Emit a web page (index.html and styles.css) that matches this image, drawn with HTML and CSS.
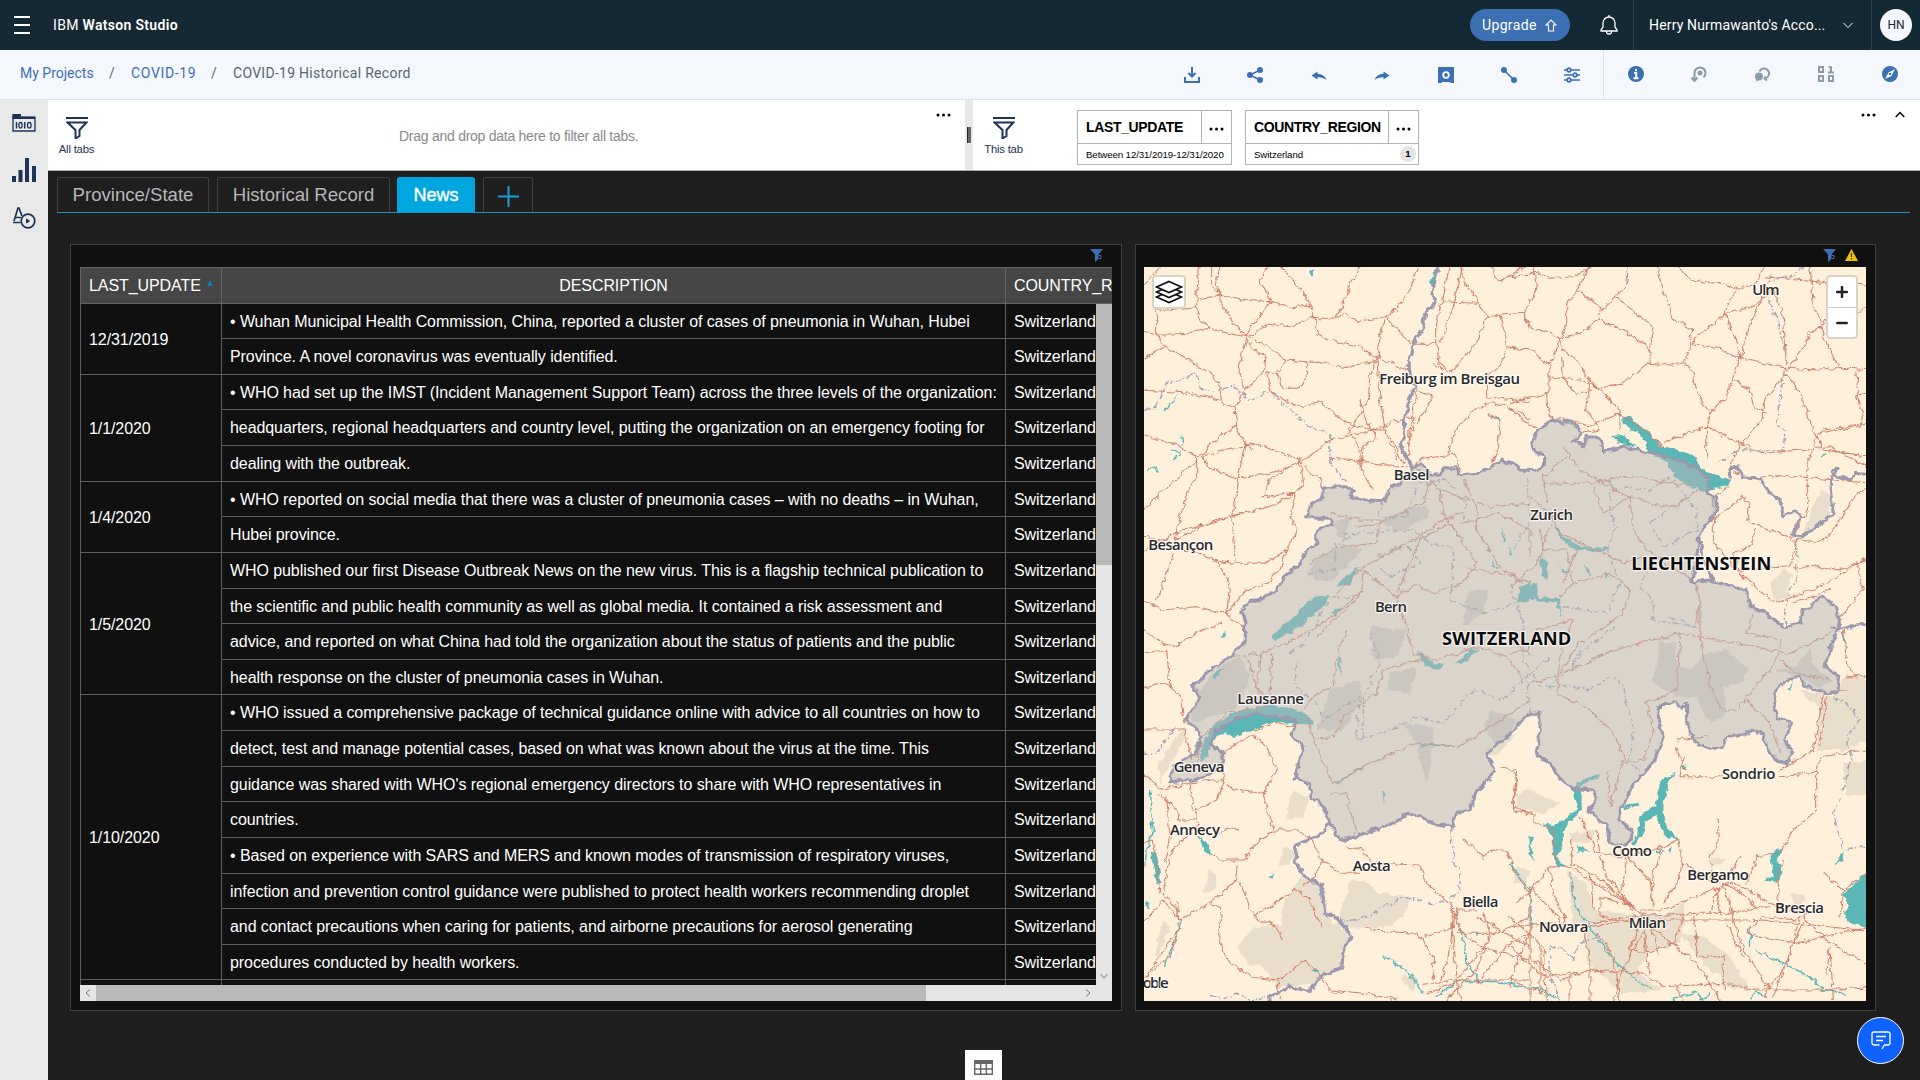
FILE: index.html
```html
<!DOCTYPE html>
<html lang="en">
<head>
<meta charset="utf-8">
<title>IBM Watson Studio</title>
<link rel="stylesheet" href="styles.css">
</head>
<body>
<header class="topbar">
  <svg class="menu" width="16" height="18" viewBox="0 0 16 18"><path d="M0 1h16M0 9h16M0 17h16" stroke="#fff" stroke-width="2"/></svg>
  <div class="brand">IBM <b>Watson Studio</b></div>
  <button class="upgrade"><span>Upgrade</span><svg width="12" height="13" viewBox="0 0 12 13"><path d="M6 1 1 6h2.500v6h5V6H11z" fill="none" stroke="#fff" stroke-width="1.100"/></svg></button>
  <svg class="bell" width="18" height="20" viewBox="0 0 18 20" fill="none" stroke="#fff" stroke-width="1.300"><path d="M9 0v2M1 16v-1l2-3V8a6 6 0 0 1 12 0v4l2 3v1zM6.500 16.500a2.500 2.500 0 0 0 5 0"/></svg>
  <div class="account"><span>Herry Nurmawanto's Acco...</span><svg width="10" height="7" viewBox="0 0 10 7"><path d="m.5 1 4.500 4.500L9.500 1" fill="none" stroke="#fff"/></svg></div>
  <div class="avatar"><span>HN</span></div>
</header>

<nav class="subbar">
  <div class="crumbs"><a>My Projects</a><i>/</i><a class="proj">COVID-19</a><i>/</i><span>COVID-19 Historical Record</span></div>
  <div class="tools">
    <svg viewBox="0 0 16 16"><path d="M8 0v9M4.500 6 8 9.500 11.500 6M1 10v5h14v-5" fill="none" stroke="#3d70b2" stroke-width="2"/></svg>
    <svg viewBox="0 0 16 16"><path d="M13 3 3 8l10 5" fill="none" stroke="#3d70b2" stroke-width="1.500"/><g fill="#3d70b2"><circle cx="3" cy="8" r="3"/><circle cx="13" cy="3" r="3"/><circle cx="13" cy="13" r="3"/></g></svg>
    <svg viewBox="0 0 16 16"><path d="m.5 8.500 6-4v2.300c4.500.2 7.500 2.300 9 6.200-3-2.200-5.500-3-9-2.800v2.300z" fill="#3d70b2"/></svg>
    <svg viewBox="0 0 16 16"><path d="m15.500 8.500-6-4v2.300C5 7 2 9.100.5 13c3-2.200 5.500-3 9-2.800v2.300z" fill="#3d70b2"/></svg>
    <svg viewBox="0 0 16 16"><path d="M0 0h16v16h-3l-1-1H4l-1 1H0z" fill="#3d70b2"/><circle cx="8" cy="8" r="2.800" fill="none" stroke="#fff" stroke-width="1.700"/></svg>
    <svg viewBox="0 0 16 16"><path d="m3 3 10 10" stroke="#3d70b2" stroke-width="1.600"/><circle cx="3" cy="3" r="3" fill="#3d70b2"/><circle cx="13" cy="13" r="3" fill="#3d70b2"/></svg>
    <svg viewBox="0 0 16 16"><g fill="none" stroke="#3d70b2" stroke-width="1.700"><path d="M0 3h16M0 8h16M0 13h16"/><g fill="#f4f7fb"><circle cx="5" cy="3" r="1.800"/><circle cx="11" cy="8" r="1.800"/><circle cx="5" cy="13" r="1.800"/></g></g></svg>
  </div>
  <div class="tools side">
    <svg viewBox="0 0 16 16"><circle cx="8" cy="8" r="8" fill="#3d70b2"/><path d="M8 3v2.200M6 7h2.200v5M5.500 12.200h5" stroke="#fff" stroke-width="2" fill="none"/></svg>
    <svg viewBox="0 0 16 16" fill="none" stroke="#8c9ba5" stroke-width="2"><path d="M3.500 14.500V7a5.500 5.500 0 1 1 9 4.200M.5 11.500l3 3.500 3-3.500"/><circle cx="9" cy="7" r="2.500" fill="#8c9ba5" stroke="none"/></svg>
    <svg viewBox="0 0 16 16"><path d="M4.500 5.500a5 5 0 1 1 5.500 6.900M10.500 10.500l-1 2 2.500 2" fill="none" stroke="#8c9ba5" stroke-width="2"/><circle cx="4" cy="10.500" r="4" fill="#8c9ba5"/><path d="m1 16 1-4h4z" fill="#8c9ba5"/></svg>
    <svg viewBox="0 0 16 16" fill="none" stroke="#8c9ba5" stroke-width="2"><path d="M1 1h4v5H1zM1 10h4v5H1zM11 10h4v5h-4zM10.500 1.300H13V6M10 6.500h6"/></svg>
    <svg viewBox="0 0 16 16"><circle cx="8" cy="8" r="8" fill="#3d70b2"/><path d="m13 3-3.500 7L3 13l3.500-6.500z" fill="#fff"/><circle cx="8" cy="8" r="1.300" fill="#3d70b2"/></svg>
  </div>
</nav>

<div class="body">
  <aside class="rail">
    <svg width="24" height="18" viewBox="0 0 24 18"><path d="M1 1v16h22V3.500H1" fill="none" stroke="#1d3458" stroke-width="1.300"/><path d="M.5 0H9v2.500h14V5H.5z" fill="#1d3458"/><path d="M4.500 8v6.500M12.700 8v6.500" stroke="#1d3458" stroke-width="1.500"/><rect x="7" y="8.500" width="3" height="5.500" rx="1.500" fill="none" stroke="#1d3458" stroke-width="1.300"/><rect x="15.500" y="8.500" width="3.500" height="5.500" rx="1.700" fill="none" stroke="#1d3458" stroke-width="1.300"/></svg>
    <svg width="24" height="24" viewBox="0 0 24 24" fill="#1d3458"><path d="M0 18h4v6H0zM6.500 12h4v12h-4zM13 0h4v24h-4zM20 8h4v16h-4z"/></svg>
    <svg width="24" height="22" viewBox="0 0 24 22" fill="none" stroke="#1d3458" stroke-width="1.700"><path d="M2 14 6 1h1l3 8M3 10.500h6M1 15.500h7.500"/><circle cx="16" cy="14" r="6.800"/><path d="m14.500 12 3 2-3 2z" fill="#1d3458" stroke-width="1"/></svg>
  </aside>

  <main class="main">
    <section class="filters">
      <div class="pane left">
        <div class="ftab"><svg width="22" height="22" viewBox="0 0 22 22"><path d="M0 1h22" stroke="#1d3458" stroke-width="2"/><path d="M1.500 5.500h19L13.500 13v6l-4 2.500V13z" fill="none" stroke="#1d3458" stroke-width="2"/></svg><span>All tabs</span></div>
        <p class="hint">Drag and drop data here to filter all tabs.</p>
        <svg class="dots" width="15" height="4" viewBox="0 0 15 4"><circle cx="2" cy="2" r="1.500"/><circle cx="7.500" cy="2" r="1.500"/><circle cx="13" cy="2" r="1.500"/></svg>
      </div>
      <div class="splitter"><i></i></div>
      <div class="pane right">
        <div class="ftab"><svg width="22" height="22" viewBox="0 0 22 22"><path d="M0 1h22" stroke="#1d3458" stroke-width="2"/><path d="M1.500 5.500h19L13.500 13v6l-4 2.500V13z" fill="none" stroke="#1d3458" stroke-width="2"/></svg><span>This tab</span></div>
        <div class="card c1"><div class="ct"><b>LAST_UPDATE</b><em><svg width="15" height="4" viewBox="0 0 15 4"><circle cx="2" cy="2" r="1.500"/><circle cx="7.500" cy="2" r="1.500"/><circle cx="13" cy="2" r="1.500"/></svg></em></div><div class="cv"><span>Between 12/31/2019-12/31/2020</span></div></div>
        <div class="card c2"><div class="ct"><b>COUNTRY_REGION</b><em><svg width="15" height="4" viewBox="0 0 15 4"><circle cx="2" cy="2" r="1.500"/><circle cx="7.500" cy="2" r="1.500"/><circle cx="13" cy="2" r="1.500"/></svg></em></div><div class="cv"><span>Switzerland</span><strong>1</strong></div></div>
        <svg class="dots" width="15" height="4" viewBox="0 0 15 4"><circle cx="2" cy="2" r="1.500"/><circle cx="7.500" cy="2" r="1.500"/><circle cx="13" cy="2" r="1.500"/></svg>
        <svg class="up" width="10" height="7" viewBox="0 0 10 7"><path d="m.7 6 4.300-4.500L9.300 6" fill="none" stroke="#000" stroke-width="1.400"/></svg>
      </div>
    </section>

    <div class="tabs">
      <div class="tab t1">Province/State</div>
      <div class="tab t2">Historical Record</div>
      <div class="tab t3 on">News</div>
      <div class="tab t4"><svg width="21" height="21" viewBox="0 0 21 21"><path d="M10.500 0v21M0 10.500h21" stroke="#189fd6" stroke-width="2"/></svg></div>
    </div>

    <div class="panels">
      <section class="panel ptable">
        <div class="phead"><svg width="13" height="13" viewBox="0 0 13 13"><path d="M0 0h13L8.500 5.500V10L5 13V5.500z" fill="#3d70b2"/><path d="M8.500 6.500h2.500v3H9" fill="none" stroke="#3d70b2"/></svg></div>
        <div class="thead"><div>LAST_UPDATE<i></i></div><div>DESCRIPTION</div><div>COUNTRY_REGION</div></div>
        <div class="tbody">
          <div class="rows">
            <div class="grp"><div class="date">12/31/2019</div><div class="lines">
              <p>• Wuhan Municipal Health Commission, China, reported a cluster of cases of pneumonia in Wuhan, Hubei</p><p>Province. A novel coronavirus was eventually identified.</p></div>
              <div class="ctry"><p>Switzerland</p><p>Switzerland</p></div></div>
            <div class="grp"><div class="date">1/1/2020</div><div class="lines">
              <p>• WHO had set up the IMST (Incident Management Support Team) across the three levels of the organization:</p><p>headquarters, regional headquarters and country level, putting the organization on an emergency footing for</p><p>dealing with the outbreak.</p></div>
              <div class="ctry"><p>Switzerland</p><p>Switzerland</p><p>Switzerland</p></div></div>
            <div class="grp"><div class="date">1/4/2020</div><div class="lines">
              <p>• WHO reported on social media that there was a cluster of pneumonia cases – with no deaths – in Wuhan,</p><p>Hubei province.</p></div>
              <div class="ctry"><p>Switzerland</p><p>Switzerland</p></div></div>
            <div class="grp"><div class="date">1/5/2020</div><div class="lines">
              <p>WHO published our first Disease Outbreak News on the new virus. This is a flagship technical publication to</p><p>the scientific and public health community as well as global media. It contained a risk assessment and</p><p>advice, and reported on what China had told the organization about the status of patients and the public</p><p>health response on the cluster of pneumonia cases in Wuhan.</p></div>
              <div class="ctry"><p>Switzerland</p><p>Switzerland</p><p>Switzerland</p><p>Switzerland</p></div></div>
            <div class="grp"><div class="date">1/10/2020</div><div class="lines">
              <p>• WHO issued a comprehensive package of technical guidance online with advice to all countries on how to</p><p>detect, test and manage potential cases, based on what was known about the virus at the time. This</p><p>guidance was shared with WHO's regional emergency directors to share with WHO representatives in</p><p>countries.</p><p>• Based on experience with SARS and MERS and known modes of transmission of respiratory viruses,</p><p>infection and prevention control guidance were published to protect health workers recommending droplet</p><p>and contact precautions when caring for patients, and airborne precautions for aerosol generating</p><p>procedures conducted by health workers.</p></div>
              <div class="ctry"><p>Switzerland</p><p>Switzerland</p><p>Switzerland</p><p>Switzerland</p><p>Switzerland</p><p>Switzerland</p><p>Switzerland</p><p>Switzerland</p></div></div>
            <div class="grp"><div class="date"></div><div class="lines"><p></p></div><div class="ctry"><p></p></div></div>
          </div>
          <div class="vbar"><i></i><svg width="8" height="6" viewBox="0 0 8 6"><path d="m.5 1 3.500 4 3.500-4" fill="none" stroke="#777"/></svg></div>
        </div>
        <div class="hbar"><svg width="6" height="8" viewBox="0 0 6 8"><path d="M5 .5 1 4l4 3.500" fill="none" stroke="#777"/></svg><i></i><svg class="r" width="6" height="8" viewBox="0 0 6 8"><path d="m1 .5 4 3.500-4 3.500" fill="none" stroke="#777"/></svg></div>
      </section>

      <section class="panel pmap">
        <div class="phead"><svg width="13" height="13" viewBox="0 0 13 13"><path d="M0 0h13L8.500 5.500V10L5 13V5.500z" fill="#3d70b2"/><path d="M8.500 6.500h2.500v3H9" fill="none" stroke="#3d70b2"/></svg><svg width="13" height="12" viewBox="0 0 13 12"><path d="M6.500 0 13 12H0z" fill="#efc100"/><path d="M6.500 4v4M6.500 9v1.500" stroke="#4a3c00" stroke-width="1.300"/></svg></div>
        <div class="map">
          <svg class="canvas" width="722" height="734" viewBox="42 111 2166 2202">
            <defs>
              <filter id="rough" x="20" y="90" width="2220" height="2260" filterUnits="userSpaceOnUse" color-interpolation-filters="sRGB"><feTurbulence type="fractalNoise" baseFrequency=".045" numOctaves="3" seed="4"/><feDisplacementMap in="SourceGraphic" scale="20" xChannelSelector="R" yChannelSelector="G"/></filter>
              <path id="ch" d="M845 710 870 703 890 718 905 735 930 735 945 713 980 713 987 735 1040 730 1075 715 1115 690 1140 700 1160 702 1170 720 1220 722 1240 705 1245 680 1215 665 1205 640 1225 597 1270 568 1300 580 1318 572 1345 592 1352 612 1330 632 1360 645 1370 620 1400 622 1415 640 1420 665 1485 650 1540 665 1580 670 1640 690 1695 712 1730 740 1737 770 1730 785 1757 800 1760 850 1725 885 1705 930 1700 990 1685 1055 1740 1050 1780 1060 1850 1082 1860 1130 1910 1150 1960 1190 2010 1180 2020 1140 2045 1135 2052 1112 2080 1100 2120 1130 2130 1190 2108 1235 2085 1310 2125 1340 2120 1392 2070 1385 2025 1370 2010 1342 1970 1350 1940 1380 1932 1430 1940 1462 1985 1478 1965 1530 1990 1570 1970 1602 1935 1590 1905 1540 1900 1510 1870 1500 1840 1515 1790 1522 1780 1552 1740 1556 1695 1535 1670 1480 1670 1420 1655 1432 1635 1418 1590 1425 1585 1460 1600 1520 1570 1600 1540 1630 1505 1670 1495 1700 1470 1740 1470 1770 1510 1808 1490 1845 1440 1840 1430 1790 1410 1770 1375 1740 1400 1700 1385 1680 1330 1675 1290 1645 1260 1600 1217 1572 1230 1520 1230 1450 1200 1450 1165 1480 1160 1495 1130 1520 1070 1570 1097 1620 1070 1655 1040 1680 1020 1740 980 1750 965 1790 910 1780 870 1760 830 1750 790 1780 740 1795 680 1820 630 1830 600 1780 580 1730 545 1700 535 1660 495 1645 505 1600 522 1550 483 1515 500 1470 430 1460 370 1450 310 1470 260 1500 240 1540 275 1565 282 1590 250 1630 190 1650 118 1658 132 1610 160 1585 195 1575 212 1520 205 1500 168 1470 210 1400 190 1370 240 1320 300 1280 342 1240 345 1170 333 1140 360 1115 400 1105 440 1080 455 1045 510 1000 530 960 560 940 560 905 605 880 600 865 565 865 530 860 545 820 580 800 578 770 610 772 640 767 670 782 660 800 700 812 765 815 775 780 805 765 815 745 845 735Z"/>
            </defs>
            <rect x="42" y="111" width="2166" height="2202" fill="#fff0dc"/>
            <g fill="#e9decb" filter="url(#rough)">
              <path d="M2040 850 2075 780 2110 800 2090 870 2020 910ZM1920 1060 1960 1020 1985 1030 1970 1100 1935 1115ZM2000 1380 2110 1400 2150 1330 2230 1360V1520L2150 1560 2060 1560 2070 1430ZM2140 1600 2230 1590V1690L2150 1700Z"/>
              <path d="M160 1490 170 1520 90 1660 85 1600ZM490 1685 540 1700 520 1760 465 1770ZM460 1850 495 1860 480 1900 445 1910ZM230 1920 262 1930 260 1980 220 1990ZM510 1940 570 1960 610 2080 660 2110 640 2200 560 2260 440 2270 400 2210 350 2200 325 2150 370 2090 450 2085 460 2020ZM660 1950 720 1960 740 1990 835 2000 830 2040 790 2085 740 2095 620 2090ZM100 2070 118 2090 85 2180 72 2170ZM810 2240 860 2240 850 2290ZM1160 1690 1200 1680 1290 1720 1240 1750 1160 1730ZM1160 1510 1100 1580 1060 1560Z"/>
              <path d="M1320 1810 1400 1800 1380 1840 1320 1835ZM1310 1920 1370 1960 1390 2040 1480 2050 1600 2060 1660 2020 1665 2060 1650 2140 1560 2160 1520 2230 1600 2280 1480 2290 1370 2200 1370 2110 1330 2080ZM1650 2110 1720 2120 1800 2180 1860 2280 1800 2270 1710 2190ZM1160 1910 1200 1920 1190 1970 1150 1960ZM1745 1880 1790 1890 1750 1910ZM1980 1985 2030 2000 2000 2030Z"/>
            </g>
            <g fill="#dfd6c8" filter="url(#rough)">
              <path d="M600 880 660 860 640 940 560 980 530 1040 600 1060 700 960 640 940ZM750 870 820 840 890 830 900 860 800 910ZM1010 1085 1080 1080 1060 1150 1000 1190ZM210 1380 270 1310 330 1280 360 1330 340 1400 310 1440 180 1480ZM720 1190 830 1200 800 1280 730 1290ZM600 1380 690 1350 700 1400 640 1500 560 1500ZM780 1330 860 1310 840 1390 770 1380ZM820 1480 910 1490 910 1540 890 1660 860 1540ZM1080 1440 1160 1470 1110 1560 1060 1500Z"/>
              <path d="M1590 1230 1640 1240 1640 1300 1680 1320 1730 1270 1790 1260 1850 1310 1840 1360 1780 1370 1790 1420 1780 1460 1740 1480 1700 1400 1640 1400 1570 1360ZM1940 1320 2000 1310 2040 1250 2050 1310 2110 1350 2070 1370 2000 1340Z"/>
            </g>
            <g fill="#5bb6b6" filter="url(#rough)">
              <path d="M1480 562 1500 560 1560 610 1590 645 1660 665 1695 680 1710 712 1760 735 1800 750 1798 768 1720 782 1680 775 1640 745 1610 700 1560 668 1540 625 1480 580ZM1443 618 1480 615 1520 650 1470 642Z"/>
              <path d="M690 1010 660 1060 620 1070 650 1035ZM600 1095 570 1140 480 1210 430 1235 425 1220 500 1150 550 1100ZM640 1125 615 1160 600 1150ZM1115 890 1128 930 1118 935ZM1080 985 1110 1020 1095 1015ZM1200 1060 1200 1080 1170 1110 1165 1075ZM1135 955 1148 975 1140 978ZM1275 880 1300 920 1360 950 1440 955 1410 970 1320 955 1280 910ZM1230 980 1250 990 1255 1050 1235 1040ZM1170 1080 1220 1060 1225 1100 1290 1105 1295 1170 1280 1120 1200 1110 1160 1120ZM1362 1000 1378 1020 1380 1045ZM1288 1005 1315 1030 1300 1030ZM1425 1025 1438 1035 1430 1050ZM860 1260 910 1300 950 1305 925 1320 880 1305ZM975 1305 1020 1260 1050 1258 1000 1300ZM248 1330 290 1315 255 1345ZM625 1280 635 1290 630 1345ZM758 1690 768 1690 762 1725Z"/>
              <path d="M210 1600 212 1545 260 1480 320 1445 400 1425 490 1435 550 1465 550 1485 500 1480 410 1480 340 1510 310 1525 280 1505 245 1540 225 1590ZM60 1865 80 1870 95 1960 80 1965ZM203 1815 235 1845 243 1870 225 1865ZM45 2020 62 2020 58 2035ZM270 1225 290 1200 288 1215ZM415 1945 430 1930 425 1945ZM540 2218 566 2220 560 2230ZM1035 2105 1048 2105 1045 2118ZM2130 1205 2148 1220 2145 1240ZM2070 682 2088 668 2080 682ZM1075 550 1110 570 1105 575ZM535 120 552 122 545 140ZM920 115 912 190 897 155Z"/>
              <path d="M1405 1630 1340 1660 1330 1700 1345 1735 1300 1770 1270 1785 1240 1780 1270 1820 1265 1860 1285 1910 1310 1915 1280 1880 1300 1850 1298 1800 1355 1740 1355 1700 1350 1670 1410 1640ZM1635 1630 1595 1650 1575 1730 1530 1760 1525 1810 1500 1845 1515 1845 1545 1800 1545 1775 1580 1755 1600 1810 1640 1835 1655 1865 1640 1830 1610 1790 1600 1740 1605 1680ZM1195 1820 1208 1820 1203 1850 1215 1890 1197 1870ZM1340 1845 1380 1865 1345 1865ZM1575 1865 1595 1855 1590 1872ZM1610 1860 1630 1850 1620 1868ZM1480 1730 1520 1718 1520 1728 1485 1738ZM1655 1605 1670 1603 1665 1620ZM1940 1855 1960 1860 1940 1890 1960 1920 1945 1955 1895 1952 1930 1935 1925 1880ZM1665 1440 1672 1440 1664 1475ZM1990 1350 1980 1385 1975 1380ZM2145 1860 2140 1890 2115 1905ZM2230 1910V2100L2180 2085 2140 2065 2155 2030 2140 1990Z"/>
            </g>
            <g fill="none" stroke="#5bb6b6" stroke-width="4" filter="url(#rough)">
              <path d="M65 1680 60 1740 70 1800 50 1860 45 1910M155 2070 140 2120 100 2210M985 2080 1005 2150 1010 2200 1045 2250M760 2180 830 2220 880 2290M920 2300 980 2255 1100 2255 1230 2280 1290 2310M1320 1940 1340 2040 1400 2120 1460 2200 1520 2250 1570 2280M1140 1900 1200 1980 1205 2090M1860 2090 1862 2150M1875 2160 1960 2200 2040 2240 2080 2280 2150 2290M105 545 140 500M130 690 150 665 130 660M155 620 160 650M50 720 75 710 85 725M870 1545 970 1548M700 1610 620 1660M1625 2310 1700 2285 1710 2310 1740 2300 1745 2285M1860 2310 1880 2285 1910 2300"/>
            </g>
            <g class="cantons" filter="url(#rough)">
              <path d="M42 540 70 540 110 460 150 450 200 430 215 475 250 485 310 467 360 515 410 482 480 535 530 585 600 615 600 700 650 755M2020 111 1980 140 1920 150 1905 180 1940 270 1970 380 1950 500 1940 580 1965 600 1960 660 1900 660 1830 660 1760 700M2000 930 2000 1050 1970 1100 1960 1160 1970 1190"/>
              <path d="M640 910 740 905 850 900 900 940 970 950 970 1050 960 1110 1060 1150 1190 1110M760 810 740 860 830 860 860 760 950 750 1010 820 1000 870M530 1030 610 1020 620 940 680 910M740 980 830 940 870 1000 780 1040 740 1000M480 1270 520 1240 550 1200 600 1100 680 1100M500 1300 495 1370 560 1420 580 1470 690 1400 680 1530 780 1500 860 1460 940 1480 1030 1380 1120 1410 1200 1330M720 1200 750 1300 700 1400 700 1540M1190 740 1200 870 1150 960M1440 750 1440 850 1460 890 1430 960 1470 1060 1430 1150 1300 1130M1480 770 1560 780 1620 740 1700 840 1700 900 1600 950 1560 880 1640 820M1560 1000 1530 1070 1570 1110 1570 1170 1700 1190 1620 1160M1140 1060 1180 1180 1180 1290 1230 1370 1330 1370 1380 1380 1440 1340 1480 1360 1490 1430 1510 1490 1500 1600 1540 1630M1200 1450 1190 1340 1260 1280M1350 1260 1320 1320 1370 1250 1460 1190"/>
              <path d="M965 1790 970 1890 990 1930 990 1980 970 2000 910 2025 830 2000 760 2030 690 2070 640 2070M42 1570 80 1570 130 1500M240 2300 280 2300 320 2290 360 2310 420 2300M1320 1930 1330 2010M1400 2120 1350 2140 1330 2190 1290 2150 1260 2150 1260 2240 1290 2310M2110 1400 2160 1430 2190 1470 2150 1520 2165 1580 2140 1680 2110 1750 2140 1860 2230 1850"/>
            </g>
            <g class="roads" filter="url(#rough)">
              <path d="M30 180 100 100M205 100 200 230 110 240 80 240 80 315 30 300M245 100 245 165 268 195 200 212M270 111 260 150 268 195 330 210 425 215 480 230 540 225 520 185 480 140 445 100M420 100 390 150 425 215 370 280 345 320 290 250 268 195M540 225 555 262 610 268 645 215 660 160 695 100M555 262 480 290 410 282 380 310 345 320 240 298 130 315 80 315 105 350 60 375 30 395M200 230 215 275 240 298M555 262 565 315 620 335 700 350 720 380 750 380 800 410 840 420M610 268 645 250 680 275 765 260 800 240 840 175 870 100M765 260 820 320 845 340 920 340 930 400 960 430 990 395 1040 340 1070 260 1040 210 1000 150 990 100M920 340 920 280 940 200 960 100M930 340 970 230 1000 100M1070 260 1110 255 1180 250 1200 280M1040 220 940 215M1080 100 1100 155 1140 140 1200 100M1110 255 1130 350 1200 360M1130 350 1110 410 1070 440 1070 500 1200 515M105 350 180 390 240 430 270 470 275 520 315 530 320 590 345 640 370 655M30 480 120 485 180 490 270 510M345 320 365 355 405 375 400 430 345 480 315 530M345 330 325 410 345 480M355 320 410 350 470 390 530 395 590 400 640 415 700 400 740 395M470 390 440 430 410 430 425 490 500 530 570 515 650 580 730 600 770 600M440 430 460 475 510 475 530 430 530 395M740 380 720 440 715 510 680 570 650 615M740 380 750 500 765 600 800 690M765 260 750 320 745 380M690 510 710 580 740 620 700 650 690 720 730 780M30 615 130 640 200 680 290 660 370 640 430 660 510 685M320 585 240 640 220 685 230 710 320 745 420 730 510 700 600 630 700 610 820 565 855 565 835 650M200 680 200 740 170 790 140 900 135 950M510 685 520 760 500 790 400 800 420 750 480 710M345 640 325 740 305 860 318 990M30 850 90 790 200 690M30 970 135 910 300 860 420 830 500 790M30 920 130 935 250 870 420 830M135 950 200 965 260 990 300 1060 290 1150M500 790 480 860 500 900 470 960 410 1000 300 1000 250 990M520 710 570 750 580 770M470 960 450 1020 410 1060 350 1080 290 1150 345 1200M30 1110 100 1140 200 1130 290 1150M130 970 90 1090 80 1110M600 685 690 690 790 710 840 710M650 590 690 660 690 700M780 620 820 700M860 480 840 600 835 690M860 480 910 500 900 520 860 580M910 400 940 420M840 710 880 685 980 675 990 720M955 670 970 610 1030 540 1090 515 1180 550 1200 570M1080 550 1110 580 1105 640 1085 700"/>
              <path d="M850 710 900 750 930 780 990 800 1080 830 1200 820M1000 850 940 870 850 930 700 1010 620 1090M800 1100 830 1020 870 930 960 880M1000 750 1040 830 1040 900 1110 1010 1180 1060M930 780 940 850 1040 1000 1000 1060 910 1090 860 1060 800 1100 700 1020 690 1100 560 1220M600 850 700 870 750 870 740 940 620 950 540 1000M680 890 750 880 880 820 900 750M990 880 1110 850 1200 900 1200 980M1000 1010 1150 1040 1200 1060M800 1100 830 1190 850 1270 910 1290 1050 1250 1130 1280 1180 1350M300 1280 390 1270 470 1240 540 1200 620 1150 700 1080M395 1270 380 1370 420 1420 425 1270M350 1280 390 1400M410 1430 290 1450 210 1530 200 1590M520 1440 560 1390 610 1370 620 1290 650 1200M530 1450 540 1500 580 1600 610 1660 720 1600 860 1540 980 1550 1100 1480 1200 1410M560 1530 610 1520 640 1460 740 1390 760 1320 900 1280M600 1690 650 1690 660 1740 680 1800 660 1830"/>
              <path d="M1140 1070 1220 1000 1270 860 1200 800M1260 850 1290 910 1400 960 1480 1000 1540 980M1300 650 1350 720 1420 760 1500 800 1600 830 1640 830 1700 780M1240 760 1380 760 1500 740 1700 770M1310 680 1240 740 1250 820M1390 770 1420 850 1500 800M1500 800 1510 900 1550 960 1700 1060 1710 1120 1700 1180M1230 900 1240 960 1310 960 1330 1060 1290 1100M1340 960 1300 1060M1330 1060 1440 1030 1500 1080 1480 1150 1340 1250 1290 1330M1140 1270 1190 1260 1220 1200 1330 1170M1280 1390 1380 1440 1450 1510 1490 1600 1540 1590 1570 1510 1550 1420 1640 1380 1650 1210M1710 1120 1710 1220 1740 1360 1770 1440 1820 1440 1940 1290 1950 1230 1850 1210 1870 1150M1850 1410 1920 1480 1950 1570M1430 1620 1440 1730 1480 1590M1200 1360 1280 1340 1450 1260 1650 1210 1980 1270 2120 1200M1950 1290 2000 1330 2110 1350M1280 1390 1290 1280 1330 1170M1140 1230 1210 1280"/>
              <path d="M1140 140 1220 130 1270 145 1330 140 1385 111M1210 100 1220 180 1180 250 1200 290 1260 310 1290 325 1310 280 1310 220 1345 180 1360 140 1385 100M1345 180 1415 235 1405 270 1350 310 1290 325 1300 360 1340 390 1380 450 1410 480 1470 540 1470 600M1495 100 1490 160 1460 200 1480 220 1545 270 1570 285 1560 340 1560 400 1610 405 1665 395 1680 350 1685 300 1630 265 1600 190 1580 100M1415 235 1460 200M1405 270 1480 300 1540 340 1560 370 1560 395 1520 430 1470 460 1410 475 1350 450 1290 445 1260 440M1640 100 1680 150 1760 160 1820 175 1790 230 1785 253M1820 175 1870 165 1910 100M1790 250 1870 230 1930 180 1960 260 1970 400M1685 340 1720 300 1790 255M1785 253 1820 330 1830 385M1830 385 1850 320 1870 260 1900 200M1665 400 1690 430 1700 490 1740 550 1730 600 1730 690M1830 385 1810 440 1790 500 1740 550M1685 340 1760 355 1830 385 1900 400 1970 415 2060 420 2150 415 2230 420M1970 430 1900 510 1900 560 1840 640 1780 620 1740 590 1700 600 1600 640M1970 430 2010 490 2050 600 2080 660 2230 680M1970 420 2010 370 2040 310 2080 280 2050 230 2040 100M2070 280 2090 350 2130 410M1905 140 2000 150 2230 170M2230 230 2080 270M1810 450 1860 480 1870 530 1910 550M2230 480 2180 500 2200 560 2190 590 2060 610M2230 580 2080 600M1140 355 1210 360 1240 400 1270 390 1290 325M1260 400 1260 490 1250 490 1140 520M1250 490 1255 560 1350 580 1370 590 1470 550 1530 590 1600 650M1295 380 1300 450 1340 490 1390 480M1380 450 1370 540 1410 600 1350 610M1140 530 1190 580 1220 590M1800 770 1750 800 1750 940 1850 1050 1940 1120 2090 1060 2230 970M1800 720 1830 640 1900 670 2010 660 2100 650 2230 720M1750 870 1840 800 1860 830 1850 870 1900 890 1990 930 2080 935 2130 870 2180 790 2230 770M2000 930 1980 1010 1830 1020 1810 970 1860 950 1880 900M1990 1010 2080 1010 2130 1020 2230 980M2180 990 2200 1080 2130 1160M2060 620 2030 720 2030 840 1990 920M1990 1120 2100 1080M1800 710 1830 740 1890 740 2000 740 2230 760M2180 420 2190 520"/>
              <path d="M30 1190 90 1235 130 1250 220 1200 270 1180M30 1270 110 1260 120 1370 150 1400 165 1480M30 1375 90 1360 120 1370M30 1500 130 1500 165 1500 185 1590M30 1620 90 1680 180 1660 240 1650 280 1650 310 1680 400 1690 415 1750 430 1800 500 1800 545 1830 575 1890 640 1930 690 1930M180 1660 190 1740 210 1780 190 1800 120 1870 100 1990 140 2040 145 2100 120 2180 30 2250M195 1740 260 1710 280 1650 275 1580 320 1540 370 1510 410 1550 440 1620 410 1670 400 1690M370 1500 430 1480 490 1490M430 1800 360 1860 350 1890 270 1890 240 1870M325 1900 320 1950 240 2020 150 2070 100 2010 30 2090M240 2020 275 2040 265 2120 290 2190 360 2240 440 2250 490 2220 520 2190 560 2220 600 2280 700 2290 800 2310M330 1955 370 2060 450 2010 495 1975 530 2000 575 2090M370 2060 440 2090 460 2130M140 2020 145 2100 60 2220M110 1700 120 1830 105 1900M85 1690 140 1740 150 1770 200 1770M30 1840 70 1830 90 1990M440 2250 450 2310M270 1810 300 1790 330 1800M580 1885 560 1930 520 1970M650 1850 700 1860 730 1900 870 1905 890 1960 960 2020 970 2060 960 2160 920 2290M700 2095 780 2105 860 2110 910 2180 910 2250M880 2120 970 2090 980 2040 1040 2040M1150 2020 1200 1990M970 2040 990 2100 1050 2150 1200 2190M1060 2050 1080 2110 1040 2220 950 2310M980 2110 1100 2110 1200 2060M1040 2260 1140 2140 1200 2110M890 2290 1000 2250 1200 2250M880 2260 980 2250 1100 2100M600 2290 640 2290M995 1830 1030 1850 1060 1885 1090 1860 1130 1860 1150 1920 1200 1990M1110 1610 1160 1620 1150 1730 1200 1750M965 2080 990 2320M1040 2060 1200 2150"/>
              <path d="M1140 1620 1160 1640 1150 1740 1215 1755 1215 1780 1270 1800 1280 1900M1260 1910 1270 1990 1310 2080M1200 1980 1260 1910 1320 1910 1390 1960 1510 2030 1540 2060M1325 1830 1325 1900 1420 1950 1510 2040M1400 1800 1410 1870 1430 1940 1510 2030M1350 1760 1400 1870 1470 1880 1490 1880 1475 1990M1490 1880 1560 1950 1570 2030M1440 1830 1490 1880 1600 1850 1650 1830M1565 2000 1570 1930 1600 1860M1640 1820 1660 1900 1640 1960 1600 2020M1660 1900 1740 1950M1530 2040 1600 2040 1700 2000 1800 1960 1860 1980 1920 2020 2010 2050M1530 2060 1700 2050 1800 2050 1920 2030M1540 2070 1700 2070 1850 2070 2000 2080 2230 2105M1380 2080 1500 2060 1550 2050M1140 2090 1280 2080 1380 2090 1500 2070M1550 2080 1600 2120 1700 2200 1780 2320M1550 2090 1520 2140 1470 2240 1450 2320M1560 2080 1590 2180M1530 2080 1500 2160 1560 2165 1630 2140 1660 2060M1400 2110 1440 2160 1460 2230 1470 2320M1540 2230 1600 2270 1780 2260 1880 2280M1540 2230 1380 2220 1290 2250 1200 2180M1510 2030 1410 2000 1410 2060 1500 2080M1510 2030 1450 1980 1380 1960M1740 2050 1750 2000 1780 1960 1840 1990 1880 2040M1780 1960 1810 2060 1830 2140 1920 2280M1690 2050 1700 2120 1700 2180 1780 2180 1780 2280M1750 1960 1740 1880 1765 1840 1762 1770M1800 1930 1830 1880M1850 1960 1880 1880 1950 1870 1990 1800 2060 1740 2060 1630 2070 1580 2230 1560M1660 1580 1650 1640 1780 1640M1950 1640 2060 1630M1950 1620 2050 1560 2080 1390 2150 1380M1640 1550 1650 1590 1670 1620M1640 1530 1740 1520M2030 2050 1990 2140 1930 2300M2010 2060 1970 2200 1900 2300M2020 2060 2100 2140 2230 2210M1850 2110 2000 2140 2130 2110 2230 2090M1950 2040 1940 1950 1960 1890M2110 2310 2100 2150 2090 2230M2140 1980 2130 2060M2085 1930 2140 1980 2208 1930M1540 2060 1550 2180 1560 2230M1200 1980 1200 2320M1140 2060 1240 2150 1250 2320M1230 2140 1230 2280M1320 2230 1320 2320M1360 2090 1380 2200 1380 2320M1140 2150 1240 2240 1340 2230M1140 2250 1240 2290M1300 2080 1200 1970M1640 2270 1660 2320M1880 2280 2080 2280 2230 2270M1850 2110 1900 2060 2000 2070M2140 1200 2150 1300 2180 1340M2150 1340 2230 1340M2090 1400 2070 1550M1210 2080 1160 2200 1140 2270M1770 2060 1760 1990M1800 2050 1800 2000M1390 2040 1380 1930M1840 2180 1790 2080"/>
            </g>
            <use href="#ch" fill="#b9baba" opacity=".5" filter="url(#rough)"/>
            <g class="border" filter="url(#rough)">
              <use href="#ch"/>
              <path d="M927 100 908 180 912 225 888 245 878 295 850 340 838 390 838 420 855 470 835 520 820 580 825 620 810 650 845 705M1797 745 1800 720 1820 708 1835 740 1890 745 1920 790 1950 810 1960 860 2000 845 2015 860 1985 915 2010 920 2060 890 2110 850 2100 770 2105 720 2125 718 2110 735 2160 750 2175 730 2230 735M1710 925 1720 990 1750 1050M600 1785 580 1810 500 1845 495 1890 520 1935 575 1965 585 2050 630 2070 665 2120 640 2160 635 2215 570 2240 540 2285 480 2270 420 2300 420 2330M2105 1190 2150 1195 2230 1175"/>
            </g>
            <g class="labels">
              <text x="748" y="461" textLength="422">Freiburg im Breisgau</text>
              <text x="791" y="749" textLength="107">Basel</text>
              <text x="55" y="959" textLength="195">Besançon</text>
              <text x="735" y="1147" textLength="96">Bern</text>
              <text x="1867" y="195" textLength="82">Ulm</text>
              <text x="1201" y="871" textLength="128">Zurich</text>
              <text x="322" y="1423" textLength="200">Lausanne</text>
              <text x="131" y="1627" textLength="152">Geneva</text>
              <text x="120" y="1815" textLength="150">Annecy</text>
              <text x="668" y="1923" textLength="114">Aosta</text>
              <text x="997" y="2031" textLength="108">Biella</text>
              <text x="38" y="2273" textLength="78">oble</text>
              <text x="1776" y="1647" textLength="160">Sondrio</text>
              <text x="1447" y="1877" textLength="119">Como</text>
              <text x="1672" y="1950" textLength="185">Bergamo</text>
              <text x="1935" y="2048" textLength="147">Brescia</text>
              <text x="1227" y="2106" textLength="148">Novara</text>
              <text x="1496" y="2094" textLength="112">Milan</text>
              <text class="country" x="1504" y="1020" textLength="420">LIECHTENSTEIN</text>
              <text class="country" x="936" y="1245" textLength="388">SWITZERLAND</text>
            </g>
          </svg>
          <div class="layers"><svg width="28" height="24" viewBox="0 0 28 24" fill="#fff" stroke="#111" stroke-width="1.800"><path d="m14 11.500 12.500 5.500L14 22.500 1.500 17z"/><path d="M14 6.500 26.500 12 14 17.500 1.500 12z"/><path d="M14 1.500 26.500 7 14 12.500 1.500 7z"/></svg></div>
          <div class="zoomer"><b><svg width="12" height="12" viewBox="0 0 12 12"><path d="M6 1v10M1 6h10" stroke="#222" stroke-width="2.500" stroke-linecap="round"/></svg></b><b><svg width="12" height="12" viewBox="0 0 12 12"><path d="M1.300 6h9.400" stroke="#222" stroke-width="2.500" stroke-linecap="round"/></svg></b></div>
        </div>
      </section>
    </div>
    <div class="sheet"><svg width="19" height="15" viewBox="0 0 19 15"><path d="M.7.7h17.600v13.600H.7zM.7 9h17.600M6.700 3v11M12.300 3v11" fill="none" stroke="#666" stroke-width="1.400"/><path d="M0 0h19v4H0z" fill="#666"/></svg></div>
    <div class="chat"><svg width="20" height="19" viewBox="0 0 20 19" fill="none" stroke="#fff" stroke-width="1.300"><path d="M8.500 14H3a2 2 0 0 1-2-2V3a2 2 0 0 1 2-2h14a2 2 0 0 1 2 2v9a2 2 0 0 1-2 2h-3.500l-2.500 4M5 5.500h10M5 9.500h7"/></svg></div>
  </main>
</div>
</body>
</html>
```
FILE: styles.css
```css
* { box-sizing: border-box; }
body { margin: 0; width: 1920px; height: 1080px; overflow: hidden; background: #1f1f1f; font-family: "Liberation Sans", Arial, sans-serif; display: flex; flex-direction: column; }
p { margin: 0; }
i, em { font-style: normal; }
svg { display: block; flex: none; }

.topbar { height: 50px; flex: none; background: #152934; color: #fff; display: flex; align-items: center; font-family: Roboto, "Noto Sans", sans-serif; font-size: 14px; }
.menu { margin-left: 14px; }
.brand { margin-left: 23px; width: 1417px; letter-spacing: .32px; }
.brand b { font-weight: 600; }
.upgrade { width: 100px; height: 32px; margin: 0; padding: 0 13px 0 12px; border: 0; border-radius: 16px; background: #3d70b2; color: #fff; font: inherit; letter-spacing: .35px; display: flex; align-items: center; justify-content: space-between; }
.bell { margin: 0 15px 0 30px; }
.account { width: 239px; height: 50px; border: 1px solid #2d3f49; border-width: 0 1px; display: flex; align-items: center; justify-content: space-between; padding: 0 18px 0 15px; letter-spacing: .16px; }
.avatar { width: 32px; height: 32px; margin-left: 8px; border-radius: 50%; background: #f4f7fb; color: #152934; font-size: 12px; display: flex; align-items: center; justify-content: center; }

.subbar { height: 50px; flex: none; background: #f4f7fb; border-bottom: 1px solid #dfe3e8; display: flex; font-family: Roboto, "Noto Sans", sans-serif; font-size: 14px; }
.crumbs { display: flex; align-items: center; width: 1161px; padding: 0 0 3px 20px; letter-spacing: .28px; color: #5a6872; }
.crumbs a { color: #3d70b2; width: 73px; letter-spacing: 0; white-space: nowrap; }
.crumbs .proj { width: 64px; letter-spacing: .65px; }
.crumbs i { width: 38px; text-align: center; }
.tools { display: flex; align-items: center; gap: 47.400px; padding-left: 23px; width: 442px; }
.tools svg { width: 16px; height: 16px; }
.side { border-left: 1px solid #dfe3e8; padding: 0 0 2px 24px; width: 317px; }

.body { flex: 1; display: flex; min-height: 0; }
.rail { width: 48px; background: #e9e9e9; display: flex; flex-direction: column; align-items: center; padding-top: 14px; }
.rail svg:nth-child(2) { margin-top: 26px; }
.rail svg:nth-child(3) { margin-top: 25px; }
.main { flex: 1; position: relative; min-width: 0; }

.filters { height: 71px; background: #fff; border-bottom: 1px solid #aaa; display: flex; color: #000; }
.pane { display: flex; align-items: flex-start; }
.left { width: 917px; }
.right { width: 947px; }
.splitter { width: 8px; background: #e8e8e8; display: flex; align-items: center; justify-content: center; }
.splitter i { width: 4px; height: 16px; background: #666; border-left: 1px solid #222; }
.ftab { width: 57px; padding-top: 17px; display: flex; flex-direction: column; align-items: center; gap: 3px; font-size: 11.300px; letter-spacing: -.2px; color: #1d3458; }
.right .ftab { width: 61px; }
.ftab span { line-height: 15px; }
.hint { width: 828px; padding: 28px 0 0 294px; font-size: 14px; line-height: 16px; letter-spacing: -.26px; color: #8a8a8a; }
.left .dots { margin: 13px 0 0 3px; }
.card { height: 55px; margin-top: 10px; border: 1px solid #b4b4b4; }
.c1 { width: 155px; margin-left: 43px; }
.c2 { width: 174px; margin-left: 13px; }
.ct { height: 33px; display: flex; border-bottom: 1px solid #b4b4b4; }
.ct b { flex: 1; padding-left: 8px; font-size: 14px; line-height: 33px; letter-spacing: -.35px; white-space: nowrap; }
.ct em { width: 30px; flex: none; border-left: 1px solid #b4b4b4; display: flex; align-items: center; justify-content: center; padding-top: 3px; }
.cv { height: 20px; display: flex; align-items: center; justify-content: space-between; padding: 0 2px 0 8px; font-size: 9.700px; letter-spacing: -.1px; white-space: nowrap; }
.cv strong { width: 16px; height: 16px; border-radius: 50%; background: #e4e4e4; text-align: center; line-height: 16px; }
.right .dots { margin: 13px 0 0 442px; }
.up { margin: 11px 0 0 19px; }

.tabs { height: 42px; margin: 0 10px 0 9px; padding-top: 6px; border-bottom: 1px solid #1593bd; display: flex; font-size: 18.600px; color: #b6b6b6; }
.tab { height: 35px; border: 1px solid #414141; border-bottom: 0; border-radius: 3px 3px 0 0; display: flex; align-items: center; justify-content: center; white-space: nowrap; }
.t1 { width: 152px; }
.t2 { width: 173px; margin-left: 8px; }
.t3 { width: 78px; margin-left: 7px; font-size: 18px; }
.t4 { width: 50px; margin-left: 8px; padding-top: 3px; }
.on { background: #00a6df; border-color: #00a6df; color: #fff; -webkit-text-stroke: .4px #fff; }

.panels { display: flex; gap: 13px; margin: 31px 0 0 22px; }
.panel { height: 767px; border: 1px solid #414141; background: #101010; }
.ptable { width: 1052px; padding: 0 8px 0 9px; }
.pmap { width: 741px; padding-left: 8px; }
.phead { height: 22px; padding: 4px 10px 0 0; display: flex; justify-content: flex-end; gap: 9px; }
.pmap .phead { padding-right: 17px; }

.thead { height: 36.500px; width: 1032px; background: #464646; border: 1px solid #646464; border-right: 0; color: #fff; display: flex; overflow: hidden; font-size: 16px; letter-spacing: -.08px; line-height: 36px; white-space: nowrap; }
.thead div { border-right: 1px solid #646464; flex: none; }
.thead div:nth-child(1) { width: 141px; padding-left: 8px; display: flex; gap: 6px; align-items: flex-start; }
.thead div:nth-child(2) { width: 784px; text-align: center; }
.thead div:nth-child(3) { width: 300px; padding-left: 8px; }
.thead i { margin-top: 12px; border: 3.500px solid transparent; border-top: 0; border-bottom: 6px solid #147ab0; }
.tbody { display: flex; width: 1032px; height: 681.500px; overflow: hidden; }
.rows { width: 1016px; overflow: hidden; border-left: 1px solid #5e5e5e; color: #fff; font-size: 16px; letter-spacing: -.08px; white-space: nowrap; }
.grp { display: flex; }
.date { width: 141px; flex: none; padding: 2px 0 0 8px; display: flex; align-items: center; border: 1px solid #5e5e5e; border-width: 0 1px 1px 0; }
.lines { width: 784px; flex: none; }
.lines p, .ctry p { height: 35.640px; line-height: 36px; padding-left: 8px; border: 1px solid #5e5e5e; border-width: 0 1px 1px 0; }
.ctry { width: 200px; flex: none; }
.vbar { width: 16px; background: #e6e6e6; display: flex; flex-direction: column; align-items: center; justify-content: space-between; padding-bottom: 6px; }
.vbar i { width: 16px; height: 261px; background: #b9b9b9; }
.hbar { height: 16px; width: 1032px; background: #e6e6e6; display: flex; align-items: center; padding-left: 5px; }
.hbar i { width: 830px; height: 16px; margin-left: 5px; background: #b9b9b9; }
.hbar .r { margin-left: 159px; }

.map { width: 722px; height: 734px; position: relative; overflow: hidden; }
.roads { fill: none; stroke: #d08370; stroke-width: 3.200; stroke-linejoin: round; }
.cantons { fill: none; stroke: #a5a4b4; stroke-width: 4.500; stroke-dasharray: 17 7 5 7; }
.border { fill: none; stroke: #9c99ad; stroke-width: 9; stroke-linejoin: round; }
.labels { font: 600 45px "Open Sans", "Noto Sans", sans-serif; fill: #2a2a2a; stroke: rgba(255, 255, 255, .8); stroke-width: 7; paint-order: stroke; stroke-linejoin: round; }
.country { font-size: 55px; font-weight: 700; fill: #0c0c0c; }
.layers { position: absolute; left: 8px; top: 8px; width: 34px; height: 34px; background: #fff; border: 2px solid #ddd3c5; border-radius: 4px; display: flex; align-items: center; justify-content: center; }
.zoomer { position: absolute; right: 8px; top: 8px; width: 32px; height: 64px; background: #fff; border: 2px solid #ddd3c5; border-radius: 4px; }
.zoomer b { height: 30px; display: flex; align-items: center; justify-content: center; }
.zoomer b + b { border-top: 1px solid #ccc; }

.sheet { position: absolute; left: 917px; top: 950px; width: 37px; height: 31px; background: #fff; display: flex; justify-content: center; padding-top: 10px; }
.chat { position: absolute; left: 1809px; top: 917px; width: 47px; height: 47px; border-radius: 50%; background: #0f62fe; border: 1px solid #fff; display: flex; align-items: center; justify-content: center; }
```
